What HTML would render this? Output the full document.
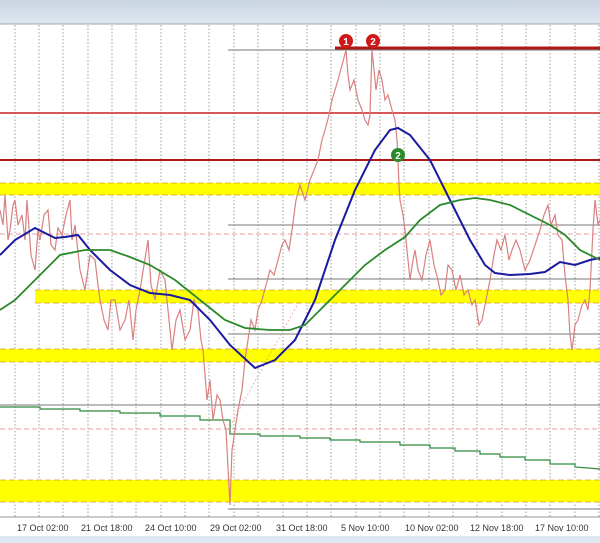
<!DOCTYPE html>
<html><head><meta charset="utf-8"><style>
html,body{margin:0;padding:0;width:600px;height:543px;overflow:hidden;background:#fff}
svg{display:block}
text{font-family:"Liberation Sans",sans-serif;font-size:9px;fill:#333}
</style></head><body>
<svg width="600" height="543" viewBox="0 0 600 543">
<defs><linearGradient id="tb" x1="0" y1="0" x2="0" y2="1"><stop offset="0" stop-color="#c9d5e2"/><stop offset="1" stop-color="#dfe7ef"/></linearGradient></defs>
<rect x="0" y="0" width="600" height="24" fill="url(#tb)"/>
<line x1="0" y1="24" x2="600" y2="24" stroke="#9aa8b8"/>
<g stroke="#888" stroke-width="0.8" stroke-dasharray="1.5,2">
<line x1="15" y1="25" x2="15" y2="517"/><line x1="39" y1="25" x2="39" y2="517"/><line x1="63" y1="25" x2="63" y2="517"/><line x1="88" y1="25" x2="88" y2="517"/><line x1="112" y1="25" x2="112" y2="517"/><line x1="136" y1="25" x2="136" y2="517"/><line x1="161" y1="25" x2="161" y2="517"/><line x1="185" y1="25" x2="185" y2="517"/><line x1="209" y1="25" x2="209" y2="517"/><line x1="234" y1="25" x2="234" y2="517"/><line x1="258" y1="25" x2="258" y2="517"/><line x1="283" y1="25" x2="283" y2="517"/><line x1="307" y1="25" x2="307" y2="517"/><line x1="331" y1="25" x2="331" y2="517"/><line x1="356" y1="25" x2="356" y2="517"/><line x1="380" y1="25" x2="380" y2="517"/><line x1="404" y1="25" x2="404" y2="517"/><line x1="429" y1="25" x2="429" y2="517"/><line x1="453" y1="25" x2="453" y2="517"/><line x1="477" y1="25" x2="477" y2="517"/><line x1="502" y1="25" x2="502" y2="517"/><line x1="526" y1="25" x2="526" y2="517"/><line x1="550" y1="25" x2="550" y2="517"/><line x1="575" y1="25" x2="575" y2="517"/><line x1="599" y1="25" x2="599" y2="517"/>
</g>
<rect x="0" y="183" width="600" height="12" fill="#ffff00"/>
<rect x="35" y="290" width="565" height="13" fill="#ffff00"/>
<rect x="0" y="349" width="600" height="13" fill="#ffff00"/>
<rect x="0" y="480" width="600" height="22" fill="#ffff00"/>
<g stroke="#d4a020" stroke-width="0.8" stroke-dasharray="6,3" fill="none">
<line x1="0" y1="183" x2="600" y2="183"/><line x1="0" y1="195" x2="600" y2="195"/>
<line x1="35" y1="290" x2="600" y2="290"/><line x1="35" y1="303" x2="600" y2="303"/>
<line x1="0" y1="349" x2="600" y2="349"/><line x1="0" y1="362" x2="600" y2="362"/>
<line x1="0" y1="480" x2="600" y2="480"/><line x1="0" y1="502" x2="600" y2="502"/>
</g>
<g stroke="#777" stroke-width="1">
<line x1="228" y1="50" x2="600" y2="50"/><line x1="228" y1="225" x2="600" y2="225"/><line x1="228" y1="279" x2="600" y2="279"/><line x1="228" y1="334" x2="600" y2="334"/><line x1="0" y1="405" x2="600" y2="405"/><line x1="228" y1="509" x2="600" y2="509"/>
</g>
<g stroke="#e08080" stroke-width="0.8" stroke-dasharray="5,3"><line x1="0" y1="234" x2="600" y2="234"/><line x1="0" y1="429" x2="600" y2="429"/></g>
<line x1="0" y1="113" x2="600" y2="113" stroke="#cc2222" stroke-width="1.5"/>
<line x1="0" y1="160" x2="600" y2="160" stroke="#b01818" stroke-width="2"/>
<line x1="335" y1="48" x2="600" y2="48" stroke="#b01818" stroke-width="3"/>
<line x1="228" y1="430" x2="300" y2="300" stroke="#e08080" stroke-width="0.6" stroke-dasharray="2,2"/>
<polyline fill="none" stroke="#2f8a3a" stroke-width="1.2" points="0,407 40,407 40,409 80,409 80,411 120,411 120,413 160,413 160,416 200,416 200,420 230,420 230,434 260,434 260,436 300,436 300,438 330,438 330,440 360,440 360,442 400,442 400,445 430,445 430,448 455,448 455,451 480,451 480,454 500,454 500,457 525,457 525,460 550,460 550,464 575,464 575,467 600,469"/>
<polyline fill="none" stroke="#d98080" stroke-width="1.2" points="0,210 3,225 5,195 8,240 10,230 13,205 15,200 18,225 22,215 25,240 27,200 31,255 35,270 38,230 40,240 44,215 48,210 51,245 55,250 58,228 62,235 66,215 70,200 72,240 75,225 80,270 85,290 90,255 95,260 98,285 100,300 104,320 108,330 111,300 115,300 120,330 125,320 129,300 133,340 136,310 140,290 144,265 148,240 151,285 155,300 160,270 165,280 169,320 172,350 176,320 180,310 185,340 190,330 194,300 198,310 201,340 203,350 207,400 210,380 213,420 217,395 220,400 223,420 226,430 230,505 232,450 235,430 238,410 242,390 245,360 248,340 251,320 255,330 258,310 262,300 266,285 270,270 274,275 278,260 282,245 285,240 289,250 292,230 296,200 300,185 305,200 310,180 314,170 318,160 322,140 325,130 329,115 332,100 335,90 338,80 342,65 346,50 348,75 350,90 354,80 358,100 362,110 365,120 368,125 370,115 372,50 374,70 376,90 379,70 382,80 385,100 388,95 392,110 395,120 397,140 398,160 399,185 400,200 403,215 405,230 408,260 410,280 413,260 415,250 418,270 422,280 426,255 430,240 434,265 438,280 441,295 445,290 448,265 452,270 456,290 460,275 464,295 468,290 472,305 475,300 479,325 482,320 486,300 490,280 494,255 497,240 501,250 505,235 509,260 512,250 516,240 520,250 525,270 530,260 535,245 540,230 544,215 548,205 551,225 555,215 558,235 562,240 565,275 568,300 570,335 572,350 575,325 578,320 582,305 585,300 588,310 590,290 593,230 595,200 598,225 600,220"/>
<polyline fill="none" stroke="#1a1aa0" stroke-width="2" points="0,255 15,240 35,228 55,238 65,237 78,235 90,250 110,270 130,285 150,293 170,295 190,300 210,320 230,345 255,368 275,360 295,340 315,300 335,240 355,190 375,150 390,130 398,128 410,135 430,160 450,200 470,240 485,265 495,273 510,275 530,274 545,272 560,262 575,265 590,260 600,258"/>
<polyline fill="none" stroke="#2a8a2a" stroke-width="1.8" points="0,310 15,300 40,275 60,255 85,250 110,250 130,257 150,265 175,280 200,300 225,320 245,328 270,330 290,330 305,325 325,305 345,285 365,265 385,250 405,237 420,220 440,205 460,200 475,198 490,200 510,205 530,215 550,225 565,235 580,250 600,260"/>
<circle cx="346" cy="41" r="7" fill="#d01818"/><text x="346" y="45" text-anchor="middle" style="fill:#fff;font-size:10px;font-weight:bold">1</text>
<circle cx="373" cy="41" r="7" fill="#d01818"/><text x="373" y="45" text-anchor="middle" style="fill:#fff;font-size:10px;font-weight:bold">2</text>
<circle cx="398" cy="155" r="7" fill="#2a8a2a"/><text x="398" y="159" text-anchor="middle" style="fill:#fff;font-size:10px;font-weight:bold">2</text>
<line x1="0" y1="517" x2="600" y2="517" stroke="#999"/>
<text x="17" y="531">17 Oct 02:00</text><text x="81" y="531">21 Oct 18:00</text><text x="145" y="531">24 Oct 10:00</text><text x="210" y="531">29 Oct 02:00</text><text x="276" y="531">31 Oct 18:00</text><text x="341" y="531">5 Nov 10:00</text><text x="405" y="531">10 Nov 02:00</text><text x="470" y="531">12 Nov 18:00</text><text x="535" y="531">17 Nov 10:00</text>
<rect x="0" y="536" width="600" height="7" fill="#dde7f2"/>
</svg>
</body></html>
